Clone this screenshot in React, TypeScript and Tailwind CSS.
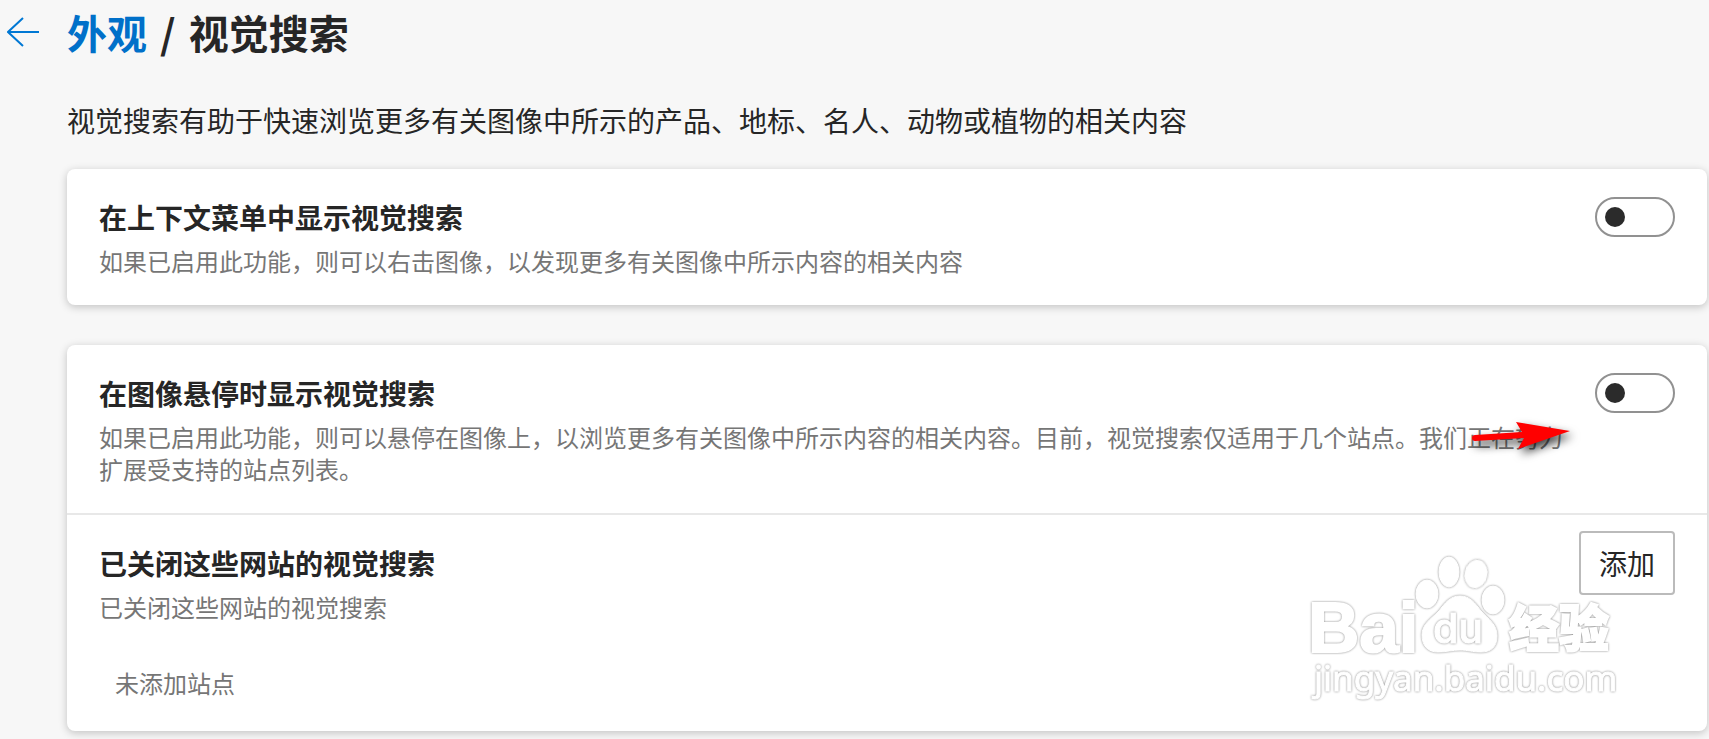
import React, { useState } from 'react';

type SettingProps = {
  id: string;
  title: string;
  description: string;
};

const SettingToggle = ({ id, title, description }: SettingProps) => {
  const [enabled, setEnabled] = useState(false);

  return (
    <div className="flex items-start justify-between gap-6 px-8 py-7">
      <div>
        <label htmlFor={id} className="block text-[28px] leading-10 font-bold">
          {title}
        </label>
        <p className="mt-2 text-2xl text-[#767676]">{description}</p>
      </div>
      <input
        id={id}
        type="checkbox"
        role="switch"
        checked={enabled}
        onChange={(e) => setEnabled(e.target.checked)}
        className="h-10 w-20 shrink-0 cursor-pointer appearance-none rounded-full border-2 border-[#919191] bg-white before:mt-2 before:ml-2 before:block before:size-5 before:rounded-full before:bg-[#2b2b2b] checked:before:ml-12"
      />
    </div>
  );
};

const Watermark = () => (
  <svg
    className="pointer-events-none absolute right-22 bottom-6 h-[160px] w-[312px] overflow-visible *:drop-shadow-[0_0_1px_#888]"
    viewBox="1307 547 312 160"
    fill="#fff"
    stroke="#fff"
    strokeWidth="1"
    aria-hidden="true"
  >
    <text x="1308" y="652" fontFamily="'Liberation Sans', sans-serif" fontSize="71" fontWeight="700" strokeWidth="2">Bai</text>
    <ellipse cx="1427" cy="594" rx="11" ry="14" />
    <ellipse cx="1449" cy="572" rx="10" ry="15" />
    <ellipse cx="1476" cy="574" rx="11" ry="14" transform="rotate(12 1476 574)" />
    <ellipse cx="1493" cy="600" rx="11" ry="14" />
    <path d="M1460 596C1470 596 1475 603 1481 611C1489 620 1497 624 1497 636C1497 648 1490 652 1481 652C1472 652 1468 650 1460 650C1452 650 1447 652 1438 652C1428 652 1422 646 1422 635C1422 624 1431 619 1439 611C1445 603 1450 596 1460 596Z" />
    <text x="1433" y="643" fontFamily="Inter, sans-serif" fontSize="41" fontWeight="500">du</text>
    <text x="1509" y="647" fontFamily="'Noto Sans CJK SC', sans-serif" fontSize="50" fontWeight="900" strokeWidth="2">经验</text>
    <text x="1314" y="691" fontFamily="'Noto Sans', sans-serif" fontSize="35" fontWeight="400">jingyan.baidu.com</text>
  </svg>
);

const App = () => {
  return (
    <main className="min-h-screen bg-[#f7f7f7] pr-0.5 pb-2 font-['Noto_Sans_CJK_SC',sans-serif] text-[#262626]">
      <header className="flex items-center gap-7 pt-1.5 pl-[7px]">
        <button type="button" aria-label="返回" className="cursor-pointer text-[#0078d4]">
          <svg className="h-8 w-8" viewBox="0 0 32 32" fill="none" stroke="currentColor" strokeWidth="2">
            <path d="M32 16H1M16 2L1 16L16 30" />
          </svg>
        </button>
        <h1 className="text-[40px] leading-[52px] font-bold">
          <a href="#appearance" className="text-[#0070c9]">外观</a> <span className="mx-1">/</span> 视觉搜索
        </h1>
      </header>

      <div className="pl-[67px]">
        <p className="mt-[42px] text-[28px] leading-10">
          视觉搜索有助于快速浏览更多有关图像中所示的产品、地标、名人、动物或植物的相关内容
        </p>

        <section className="mt-[29px] rounded-lg bg-white shadow-[0_2px_8px_rgba(0,0,0,0.22)]">
          <SettingToggle
            id="context-menu"
            title="在上下文菜单中显示视觉搜索"
            description="如果已启用此功能，则可以右击图像，以发现更多有关图像中所示内容的相关内容"
          />
        </section>

        <section className="relative mt-10 rounded-lg bg-white shadow-[0_2px_8px_rgba(0,0,0,0.22)]">
          <div className="relative">
            <SettingToggle
              id="image-hover"
              title="在图像悬停时显示视觉搜索"
              description="如果已启用此功能，则可以悬停在图像上，以浏览更多有关图像中所示内容的相关内容。目前，视觉搜索仅适用于几个站点。我们正在努力扩展受支持的站点列表。"
            />
            <svg
              className="pointer-events-none absolute right-34 bottom-15 h-8 w-[100px] overflow-visible drop-shadow-[3px_5px_5px_rgba(0,0,0,0.75)]"
              viewBox="0 -4 100 32"
              fill="#f00"
              aria-hidden="true"
            >
              <path d="M4 10L51 7L45 -3L99 6L47 24L53 13L4 16A3 3 0 0 1 4 10Z" />
            </svg>
          </div>

          <div className="border-t-2 border-[#e8e8e8] pb-8">
            <div className="flex items-start justify-between gap-6 px-8 pt-4">
              <div className="pt-3">
                <h2 className="text-[28px] leading-10 font-bold">已关闭这些网站的视觉搜索</h2>
                <p className="mt-2 text-2xl text-[#767676]">已关闭这些网站的视觉搜索</p>
              </div>
              <button
                type="button"
                className="h-16 w-24 shrink-0 cursor-pointer rounded-sm border-2 border-[#bbb] bg-white text-[28px]"
              >
                添加
              </button>
            </div>
            <p className="mt-11 pl-12 text-2xl text-[#767676]">未添加站点</p>
          </div>
          <Watermark />
        </section>
      </div>
    </main>
  );
};

export default App;
